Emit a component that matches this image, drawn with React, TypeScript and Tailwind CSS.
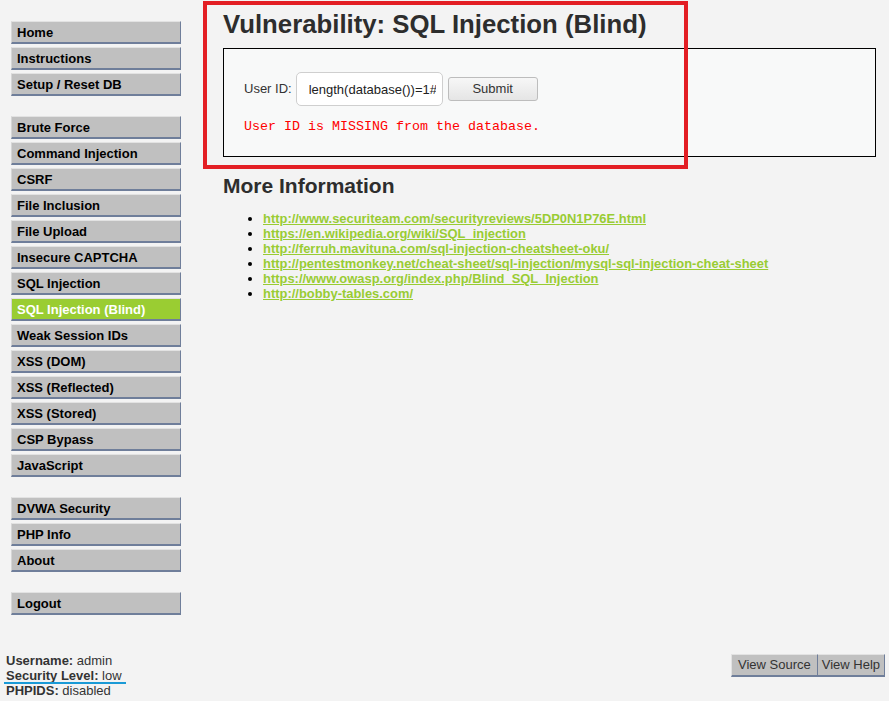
import { JSX } from 'react';

const menuGroups: string[][] = [
  ['Home', 'Instructions', 'Setup / Reset DB'],
  [
    'Brute Force',
    'Command Injection',
    'CSRF',
    'File Inclusion',
    'File Upload',
    'Insecure CAPTCHA',
    'SQL Injection',
    'SQL Injection (Blind)',
    'Weak Session IDs',
    'XSS (DOM)',
    'XSS (Reflected)',
    'XSS (Stored)',
    'CSP Bypass',
    'JavaScript',
  ],
  ['DVWA Security', 'PHP Info', 'About'],
  ['Logout'],
];

const links: string[] = [
  'http://www.securiteam.com/securityreviews/5DP0N1P76E.html',
  'https://en.wikipedia.org/wiki/SQL_injection',
  'http://ferruh.mavituna.com/sql-injection-cheatsheet-oku/',
  'http://pentestmonkey.net/cheat-sheet/sql-injection/mysql-sql-injection-cheat-sheet',
  'https://www.owasp.org/index.php/Blind_SQL_Injection',
  'http://bobby-tables.com/',
];

const ACTIVE = 'SQL Injection (Blind)';

function MenuItem({ label }: { label: string }): JSX.Element {
  const isActive = label === ACTIVE;
  return (
    <li
      className={
        'h-[23px] mb-[3px] pl-[5px] leading-[21px] text-[13px] font-bold border-t border-l border-b-2 border-r ' +
        'border-t-[#e2e2e2] border-l-[#d6d6d6] border-r-[#6f7e9a] border-b-[#6f7e9a] ' +
        (isActive ? 'bg-[#9acd32] text-white' : 'bg-[#c0c0c0] text-black')
      }
    >
      {label}
    </li>
  );
}

function Sidebar(): JSX.Element {
  return (
    <nav className="w-[170px] ml-[11px] pt-[21px] shrink-0">
      {menuGroups.map((group, i) => (
        <ul key={i} className={i > 0 ? 'mt-[20px]' : ''}>
          {group.map(label => (
            <MenuItem key={label} label={label} />
          ))}
        </ul>
      ))}
    </nav>
  );
}

function App(): JSX.Element {
  return (
    <div className="min-h-[701px] flex flex-col bg-[#f3f3f3] text-[#333] font-['Liberation_Sans',Arial,sans-serif]">
      <div className="flex">
        <Sidebar />
        <main className="relative ml-[42px] mr-[13px] flex-1 pt-[9px]">
          <h1 className="text-[25.75px] font-bold leading-[30px] text-[#2d2d2d]">Vulnerability: SQL Injection (Blind)</h1>
          <div className="mt-[9px] border border-black bg-[#f8f9f9] pl-[20px] pt-[23px] pb-[22px]">
            <form className="flex items-center text-[13px]" onSubmit={e => e.preventDefault()}>
              <label className="text-[#333]">User ID:</label>
              <input
                className="ml-[4px] w-[147px] h-[34px] rounded-[5px] border border-[#cfcfcf] bg-white pl-[12px] pr-[6px] text-[13px] text-[#222] outline-none"
                defaultValue="length(database())=1#"
              />
              <button
                type="submit"
                className="ml-[5px] w-[90px] h-[24px] rounded-[3px] border border-[#bdbdbd] bg-gradient-to-b from-[#f7f7f7] to-[#e5e5e5] text-[13px] text-[#333]"
              >
                Submit
              </button>
            </form>
            <pre className="mt-[13px] text-[13.33px] leading-[15px] text-[#ff0000] font-['Liberation_Mono','Courier_New',monospace]">
              User ID is MISSING from the database.
            </pre>
          </div>

          <h2 className="mt-[17px] text-[21px] font-bold leading-[24px] text-[#2d2d2d]">More Information</h2>
          <ul className="mt-[13px] list-disc pl-[40px] text-[12.93px] leading-[15px] font-bold marker:text-black">
            {links.map(link => (
              <li key={link}>
                <a href={link} className="text-[#99cc33] underline">
                  {link}
                </a>
              </li>
            ))}
          </ul>

          <div className="absolute left-[-20px] top-[1px] w-[485px] h-[168px] border-4 border-[#e31e24] pointer-events-none" />
        </main>
      </div>

      <footer className="mt-auto flex items-end justify-between pb-[3px]">
        <div className="pl-[6px] text-[13px] leading-[15px] text-[#333]">
          <div>
            <b>Username:</b> admin
          </div>
          <div className="relative">
            <b>Security Level:</b> low
            <span className="absolute left-[-2px] top-[14px] w-[122px] h-[2px] bg-[#1a9ad6]" />
          </div>
          <div>
            <b>PHPIDS:</b> disabled
          </div>
        </div>
        <div className="flex mr-[4px] mb-[21px] text-[13px] text-[#333]">
          <button className="h-[23px] px-[6px] bg-[#c0c0c0] border-t border-l border-[#e2e2e2] border-r border-r-[#6f7e9a] border-b-2 border-b-[#6f7e9a]">
            View Source
          </button>
          <button className="h-[23px] px-[4px] bg-[#c0c0c0] border-t border-[#e2e2e2] border-r border-r-[#6f7e9a] border-b-2 border-b-[#6f7e9a]">
            View Help
          </button>
        </div>
      </footer>
    </div>
  );
}

export default App;
